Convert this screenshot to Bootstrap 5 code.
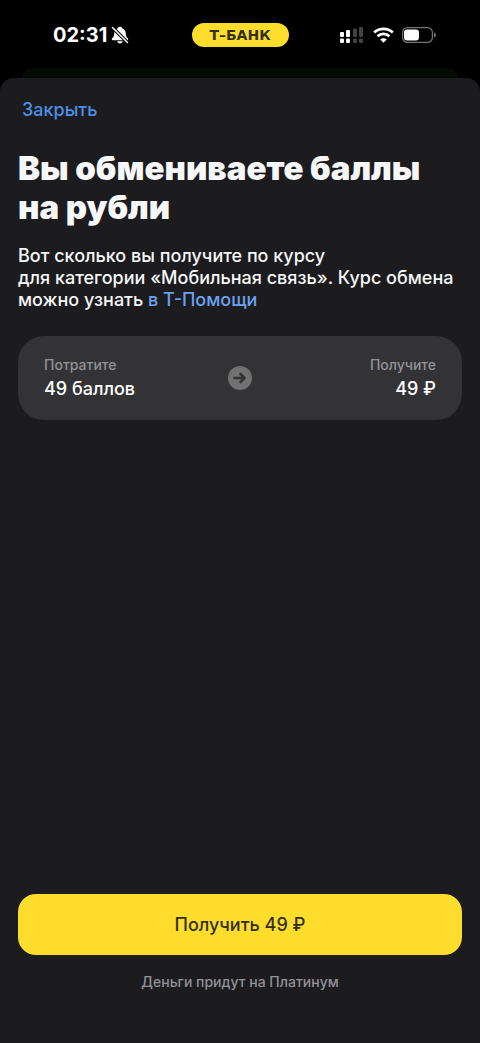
<!DOCTYPE html>
<html lang="ru" data-bs-theme="dark">
<head>
<meta charset="utf-8">
<meta name="viewport" content="width=device-width, initial-scale=1">
<title>Обмен баллов</title>
<link href="https://cdn.jsdelivr.net/npm/bootstrap@5.3.0/dist/css/bootstrap.min.css" rel="stylesheet">
<style>
  body { font-family: Inter, "Liberation Sans", sans-serif; font-size: 18px; line-height: 22px; background: #000; }
  .status-bar { height: 68px; padding: 2px 44px 0; color: #fff; }
  .status-side { flex: 1 1 0; }
  .clock { font-size: 20px; line-height: 24px; font-weight: 700; margin-left: 9px; }
  .brand-pill { background: #ffdd2d; color: #333018; height: 24px; width: 97px; font: 700 14px/24px "DejaVu Sans", sans-serif; }
  .sheet-behind { height: 10px; margin: 0 22px; border-radius: 10px 10px 0 0; background: #060a05; }
  .sheet { background: #1c1c1e; border-radius: 14px 14px 0 0; padding: 21px 18px 50px; }
  .close-link { padding: 0 4px; color: #4a8fe8; font-weight: 550; }
  .sheet-title { margin: 28px 0 18px; font-size: 33px; line-height: 39px; font-weight: 900; color: #f6f7f8; }
  .intro { color: #f6f7f8; font-weight: 550; margin: 0 -4px 25px 0; }
  .intro a { color: #6aa3f0; }
  .rate-card { background: #333335; border-radius: 26px; padding: 18px 26px; min-height: 84px; }
  .hint { color: #929299; font-size: 14px; line-height: 22px; font-weight: 550; }
  .amount { color: #fff; line-height: 26px; font-weight: 550; }
  .get-btn { --bs-btn-bg: #ffdd2d; --bs-btn-color: #333018; --bs-btn-hover-bg: #ffcd33; --bs-btn-hover-color: #333018; --bs-btn-border-width: 0; --bs-btn-border-radius: 18px; height: 61px; font-size: 18px; font-weight: 500; }
</style>
</head>
<body>
<div class="d-flex flex-column min-vh-100">
  <header class="status-bar d-flex align-items-center">
    <div class="status-side d-flex align-items-center gap-1">
      <span class="clock">02:31</span>
      <svg width="18" height="18" viewBox="0 0 18 18" aria-label="Без звука">
        <path d="M9 .8C8 .8 7 1.500 6.800 2.300 4.500 3 3.300 5 3.300 7.200 3.300 10 2.500 11 1.100 12.300.3 13.200.8 14.300 1.800 14.300H16.200C17.200 14.300 17.500 13.200 16.900 12.300 15.500 11 14.700 10 14.700 7.200 14.700 5 13.500 3 11.200 2.300 11 1.500 10 .8 9 .8ZM6.200 15.200H11.800C11.500 16.600 10.300 17.400 9 17.400S6.500 16.600 6.200 15.200Z" fill="#fff"/>
        <path d="M1.500 1.500 16.500 16.500" stroke="#000" stroke-width="3.600"/>
        <path d="M1.500 1.500 16.500 16.500" stroke="#fff" stroke-width="1.500" stroke-linecap="round"/>
      </svg>
    </div>
    <div class="brand-pill rounded-pill text-center">Т–БАНК</div>
    <div class="status-side d-flex align-items-center justify-content-end gap-2">
      <svg width="26" height="18" viewBox="0 0 26 18" aria-label="Сигнал сети">
        <g fill="#fff"><rect x="1" y="6" width="4" height="5" rx="1"/><rect x="7" y="4" width="4" height="7" rx="1"/><rect x="1" y="12.500" width="4" height="4.500" rx="1.200"/><rect x="7" y="12.500" width="4" height="4.500" rx="1.200"/></g>
        <g fill="#424242"><rect x="14" y="2.500" width="4" height="8.500" rx="1"/><rect x="20" y="1" width="4" height="10" rx="1"/><rect x="14" y="12.500" width="4" height="4.500" rx="1.200"/><rect x="20" y="12.500" width="4" height="4.500" rx="1.200"/></g>
      </svg>
      <svg width="21" height="16" viewBox="0 0 21 16" fill="none" stroke="#fff" stroke-width="2.800" aria-label="Wi-Fi">
        <path d="M1.200 5.500C6.500.7 14.500.7 19.800 5.500M4.500 9.200C8 6.100 13 6.100 16.500 9.200"/>
        <path d="M10.500 15.800 7.200 12.400C9 10.800 12 10.800 13.800 12.400Z" fill="#fff" stroke="none"/>
      </svg>
      <svg width="34" height="16" viewBox="0 0 34 16" aria-label="Батарея">
        <rect x=".6" y=".6" width="29.800" height="14.800" rx="4.800" fill="none" stroke="#757575" stroke-width="1.200"/>
        <rect x="2" y="2.500" width="15" height="11" rx="3" fill="#fff"/>
        <path d="M32 5.500Q34 6 34 8T32 10.500Z" fill="#757575"/>
      </svg>
    </div>
  </header>
  <div class="sheet-behind"></div>
  <main class="sheet flex-grow-1 d-flex flex-column">
    <div><a href="#" class="close-link text-decoration-none">Закрыть</a></div>
    <h1 class="sheet-title">Вы обмениваете баллы на&nbsp;рубли</h1>
    <p class="intro">Вот сколько вы получите по курсу<br>для категории «Мобильная связь». Курс обмена<br>можно узнать <a href="#" class="text-decoration-none">в&nbsp;Т-Помощи</a></p>
    <section class="rate-card d-flex align-items-center">
      <div class="status-side"><div class="hint">Потратите</div><div class="amount">49 баллов</div></div>
      <svg width="24" height="24" viewBox="0 0 24 24" aria-hidden="true">
        <circle cx="12" cy="12" r="12" fill="#717171"/>
        <path d="M6.500 12H16M12.500 8 16.500 12 12.500 16" fill="none" stroke="#333335" stroke-width="2.600" stroke-linecap="round" stroke-linejoin="round"/>
      </svg>
      <div class="status-side text-end"><div class="hint">Получите</div><div class="amount">49 ₽</div></div>
    </section>
    <footer class="mt-auto text-center">
      <button type="button" class="btn get-btn w-100">Получить 49 ₽</button>
      <div class="hint mt-3">Деньги придут на Платинум</div>
    </footer>
  </main>
</div>
<script src="https://cdn.jsdelivr.net/npm/bootstrap@5.3.0/dist/js/bootstrap.bundle.min.js"></script>
</body>
</html>
